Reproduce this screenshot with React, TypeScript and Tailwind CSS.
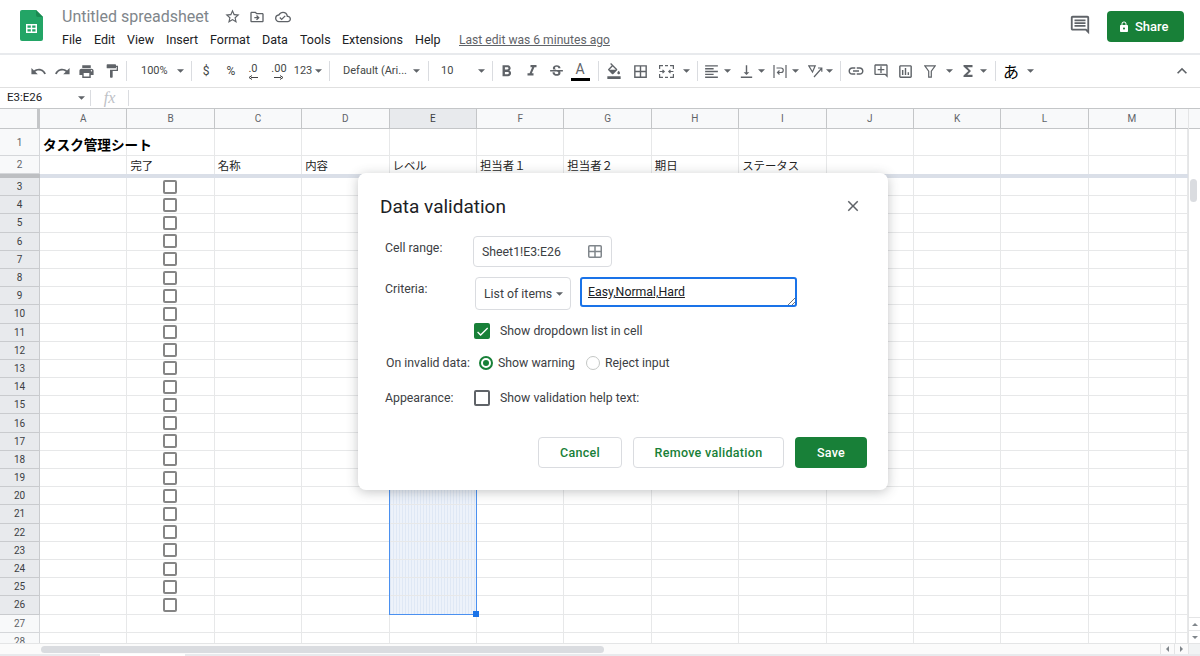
import type { ReactNode } from "react";
import {
  MdBorderAll,
  MdCheck,
  MdClose,
  MdExpandLess,
  MdFormatAlignLeft,
  MdFormatBold,
  MdFormatColorFill,
  MdFormatItalic,
  MdFormatPaint,
  MdFunctions,
  MdLink,
  MdLock,
  MdOutlineAddComment,
  MdOutlineCloudDone,
  MdOutlineComment,
  MdOutlineDriveFileMove,
  MdOutlineInsertChart,
  MdPrint,
  MdRedo,
  MdStarBorder,
  MdStrikethroughS,
  MdUndo,
  MdVerticalAlignBottom,
} from "react-icons/md";

const gridCols = "grid grid-cols-[40px_repeat(13,87.4px)_1fr]";
const columns = ["A", "B", "C", "D", "E", "F", "G", "H", "I", "J", "K", "L", "M"];
const headings = ["", "完了", "名称", "内容", "レベル", "担当者１", "担当者２", "期日", "ステータス", "", "", "", ""];
const rowNumbers = Array.from({ length: 26 }, (_, i) => i + 3);
const menus = [
  ["File", "w-[32px]"],
  ["Edit", "w-[33px]"],
  ["View", "w-[39px]"],
  ["Insert", "w-[44px]"],
  ["Format", "w-[52px]"],
  ["Data", "w-[38px]"],
  ["Tools", "w-[42px]"],
  ["Extensions", "w-[73px]"],
  ["Help", "w-[44px]"],
];

function Caret({ className = "" }: { className?: string }) {
  return (
    <span className={`flex justify-center ${className}`}>
      <svg width="7" height="4" viewBox="0 0 8 4">
        <path d="M0 0h8L4 4z" fill="#5f6368" />
      </svg>
    </span>
  );
}

function Sep({ className = "" }: { className?: string }) {
  return <span className={`h-[20px] w-px bg-[#dadce0] ${className}`} />;
}

function Slot({ className, children }: { className: string; children: ReactNode }) {
  return <span className={`flex items-center justify-center text-[#444746] ${className}`}>{children}</span>;
}

function MergeIcon() {
  return (
    <svg width="15" height="13" viewBox="0 0 15 13" fill="none" stroke="#5f6368" strokeWidth="1.2">
      <path d="M.6 4V.6h3.400M11 .6h3.400V4M.6 9v3.400H4M11 12.400h3.400V9M6 .6h3M6 12.400h3" />
      <path d="M.6 6.500h4.500M3.500 4.800l1.700 1.700-1.700 1.700M14.400 6.500H9.900M11.500 4.800L9.800 6.500l1.700 1.700" />
    </svg>
  );
}

function WrapIcon() {
  return (
    <svg width="14" height="15" viewBox="0 0 14 15" fill="none" stroke="#5f6368" strokeWidth="1.2">
      <path d="M1 1v13M13 1v13" />
      <path d="M3.500 4H8a2.200 2.200 0 0 1 0 4.500H4.500M6.500 6.500l-2 2 2 2" />
    </svg>
  );
}

function RotateIcon() {
  return (
    <svg width="15" height="13" viewBox="0 0 15 13" fill="none" stroke="#5f6368" strokeWidth="1.2">
      <path d="M.8.8h6.400L4.500 7z" />
      <path d="M6 12l7.500-8.500M10 3h3.800v3.800" />
    </svg>
  );
}

function FilterIcon() {
  return (
    <svg width="12" height="13" viewBox="0 0 12 13" fill="none" stroke="#5f6368" strokeWidth="1.2">
      <path d="M.8.8h10.400L7.300 6.200v6h-2.600v-6z" />
    </svg>
  );
}

function Toolbar() {
  return (
    <div className="flex h-[33px] items-center border-b border-[#e0e0e0] pl-[26px] text-[11px]">
      <Slot className="w-[24px]"><MdUndo size={17} color="#5f6368" /></Slot>
      <Slot className="w-[24px]"><MdRedo size={17} color="#5f6368" /></Slot>
      <Slot className="w-[25px]"><MdPrint size={17} color="#5f6368" /></Slot>
      <Slot className="w-[26px]"><MdFormatPaint size={16} color="#5f6368" /></Slot>
      <Sep className="ml-[1px]" />
      <span className="w-[48px] pl-[14px] text-[#444746]">100%</span>
      <Caret className="w-[10px]" />
      <Sep className="ml-[6px]" />
      <Slot className="w-[28px] text-[12px]">$</Slot>
      <Slot className="w-[22px] text-[12px]">%</Slot>
      <Slot className="w-[22px] flex-col">
        <span className="text-[11px] leading-[12px]">.0</span>
        <svg width="10" height="5" viewBox="0 0 10 5"><path d="M10 2.500H3M4 .5L1 2.500l3 2" fill="none" stroke="#444" strokeWidth="1" /></svg>
      </Slot>
      <Slot className="w-[30px] flex-col">
        <span className="text-[11px] leading-[12px]">.00</span>
        <svg width="10" height="5" viewBox="0 0 10 5"><path d="M0 2.500h7M6 .5l3 2-3 2" fill="none" stroke="#444" strokeWidth="1" /></svg>
      </Slot>
      <Slot className="w-[18px]">123</Slot>
      <Caret className="w-[12px]" />
      <Sep className="ml-[5px]" />
      <span className="w-[81px] whitespace-nowrap pl-[13px] text-[#444746]">Default (Ari...</span>
      <Caret className="w-[10px]" />
      <Sep className="ml-[7px]" />
      <span className="w-[47px] pl-[12px] text-[#444746]">10</span>
      <Caret className="w-[10px]" />
      <Sep className="ml-[6px]" />
      <Slot className="w-[27px]"><MdFormatBold size={19} color="#5f6368" /></Slot>
      <Slot className="w-[24px]"><MdFormatItalic size={18} color="#5f6368" /></Slot>
      <Slot className="w-[24px]"><MdStrikethroughS size={17} color="#5f6368" /></Slot>
      <Slot className="w-[24px] flex-col">
        <span className="text-[14px] leading-[15px] text-[#5f6368]">A</span>
        <span className="mt-[1px] h-[3px] w-[19px] bg-black" />
      </Slot>
      <Sep className="ml-[6px]" />
      <Slot className="w-[29px]"><MdFormatColorFill size={16} color="#5f6368" /></Slot>
      <Slot className="w-[25px]"><MdBorderAll size={17} color="#5f6368" /></Slot>
      <Slot className="w-[27px]"><MergeIcon /></Slot>
      <Caret className="w-[12px]" />
      <Sep className="ml-[5px]" />
      <Slot className="ml-[2px] w-[22px]"><MdFormatAlignLeft size={17} color="#5f6368" /></Slot>
      <Caret className="w-[10px]" />
      <Slot className="ml-[3px] w-[22px]"><MdVerticalAlignBottom size={17} color="#5f6368" /></Slot>
      <Caret className="w-[9px]" />
      <Slot className="ml-[4px] w-[20px]"><WrapIcon /></Slot>
      <Caret className="w-[10px]" />
      <Slot className="ml-[5px] w-[20px]"><RotateIcon /></Slot>
      <Caret className="w-[8px]" />
      <Sep className="ml-[7px]" />
      <Slot className="w-[30px]"><MdLink size={18} color="#5f6368" /></Slot>
      <Slot className="w-[20px]"><MdOutlineAddComment size={16} color="#5f6368" /></Slot>
      <Slot className="w-[28px]"><MdOutlineInsertChart size={17} color="#5f6368" /></Slot>
      <Slot className="w-[22px]"><FilterIcon /></Slot>
      <Caret className="ml-[3px] w-[10px]" />
      <Slot className="ml-[4px] w-[20px]"><MdFunctions size={18} color="#5f6368" /></Slot>
      <Caret className="w-[10px]" />
      <Sep className="ml-[7px]" />
      <Slot className="w-[30px] font-['Noto_Sans_CJK_JP',sans-serif] text-[16px] text-black">あ</Slot>
      <Caret className="w-[8px]" />
      <Slot className="ml-auto mr-[8px] w-[20px]"><MdExpandLess size={22} color="#5f6368" /></Slot>
    </div>
  );
}

function SheetCheckbox() {
  return <span className="mr-[1px] h-[14px] w-[14px] rounded-[2px] border-2 border-[#858585] bg-white" />;
}

function Sheet() {
  const cell = "border-b border-r border-[#e7e8e9]";
  const rowHead = "flex items-center justify-center border-b border-r text-[10px]";
  return (
    <div className="relative min-h-0 flex-1 overflow-hidden">
      <div className={`${gridCols} h-[20px] border-b border-[#c4c6c8] bg-[#f8f9fa] text-[10px] text-[#5f6368]`}>
        <div className="border-r-[3px] border-[#c4c6c8]" />
        {columns.map((c) => (
          <div
            key={c}
            className={`flex items-center justify-center border-r border-[#c4c6c8] ${c === "E" ? "bg-[#e8eaed] text-[#3c4043]" : ""}`}
          >
            {c}
          </div>
        ))}
        <div />
      </div>

      <div className={`${gridCols} h-[27px]`}>
        <div className={`${rowHead} border-[#d5d7da] bg-[#f8f9fa] text-[#5f6368]`}>1</div>
        {columns.map((c, i) => (
          <div key={c} className={`${cell} ${i === 0 ? "overflow-visible" : ""}`}>
            {i === 0 && (
              <span className="block whitespace-nowrap pl-[3px] pt-[5px] font-['Noto_Sans_CJK_JP',sans-serif] text-[13.6px] font-bold leading-[20px] text-black">
                タスク管理シート
              </span>
            )}
          </div>
        ))}
        <div className={cell} />
      </div>

      <div className={`${gridCols} h-[18px]`}>
        <div className={`${rowHead} border-[#d5d7da] bg-[#f8f9fa] text-[#5f6368]`}>2</div>
        {headings.map((h, i) => (
          <div
            key={i}
            className="overflow-hidden whitespace-nowrap border-r border-[#e7e8e9] pl-[3px] font-['Noto_Sans_CJK_JP',sans-serif] text-[11.4px] leading-[18px] text-[#222]"
          >
            {h}
          </div>
        ))}
        <div className="border-r border-[#e7e8e9]" />
      </div>

      <div className={`${gridCols} h-[4px]`}>
        <div className="bg-[#bdbfc2]" />
        <div className="col-span-14 bg-[#dadfe8]" />
      </div>

      {rowNumbers.map((n) => {
        const selected = n <= 26;
        return (
          <div key={n} className={`${gridCols} h-[18.2px]`}>
            <div
              className={`${rowHead} ${selected ? "border-[#c9cbce] bg-[#e8eaed] text-[#3c4043]" : "border-[#d5d7da] bg-[#f8f9fa] text-[#5f6368]"}`}
            >
              {n}
            </div>
            {columns.map((c) => (
              <div
                key={c}
                className={`${cell} flex items-center justify-center ${c === "E" && selected ? "bg-[repeating-linear-gradient(90deg,#dfe8f5_0_1px,#edf2fa_1px_3px)]" : ""}`}
              >
                {c === "B" && selected && <SheetCheckbox />}
              </div>
            ))}
            <div className={cell} />
          </div>
        );
      })}

      {/* range selection */}
      <div className="absolute left-[389px] top-[69px] h-[437px] w-[88px] border border-[#4a90f0]">
        <span className="absolute -bottom-[3px] -right-[3px] h-[6px] w-[6px] bg-[#1a73e8]" />
      </div>
    </div>
  );
}

function DialogCheck({ checked }: { checked?: boolean }) {
  if (checked) {
    return (
      <span className="flex h-[16px] w-[16px] items-center justify-center rounded-[2px] bg-[#188038]">
        <MdCheck size={15} color="#fff" />
      </span>
    );
  }
  return <span className="h-[16px] w-[16px] rounded-[2px] border-2 border-[#5f6368]" />;
}

function Dialog() {
  return (
    <div className="absolute left-[358px] top-[173px] w-[530px] rounded-[8px] bg-white pb-[22px] pl-[22px] pr-[21px] pt-[21px] text-[12.3px] text-[#3c4043] shadow-[0_2px_12px_rgba(60,64,67,0.3)]">
      <div className="flex h-[24px] items-center justify-between">
        <h2 className="pt-[2px] text-[19px] font-normal text-[#202124]">Data validation</h2>
        <MdClose size={18} color="#5f6368" className="mr-[5px]" />
      </div>

      <div className="mt-[18px] flex">
        <span className="w-[93px] pl-[5px] pt-[3px]">Cell range:</span>
        <div className="flex h-[31px] w-[139px] items-center justify-between rounded-[4px] border border-[#dadce0] pl-[8px] pr-[9px]">
          <span className="pt-[2px]">Sheet1!E3:E26</span>
          <svg width="14" height="13" viewBox="0 0 14 13" fill="none" stroke="#80868b" strokeWidth="1.500">
            <rect x="0.75" y="0.75" width="12.5" height="11.5" rx="1" />
            <path d="M7 1v11M1 6.500h12" />
          </svg>
        </div>
      </div>

      <div className="mt-[10px] flex">
        <span className="w-[93px] pl-[5px] pt-[3px]">Criteria:</span>
        <div className="ml-[2px] flex h-[33px] w-[96px] items-center justify-between rounded-[4px] border border-[#dadce0] pl-[8px] pr-[7px]">
          <span className="pt-[1px]">List of items</span>
          <Caret />
        </div>
        <div className="relative ml-[9px] h-[30px] w-[217px] rounded-[3px] border-2 border-[#1a73e8] pl-[6px] pt-[4px] leading-[18px] text-[#202124] underline">
          Easy,Normal,Hard
          <svg width="7" height="7" viewBox="0 0 7 7" className="absolute bottom-0 right-0" stroke="#70757a" strokeWidth="1">
            <path d="M0 7l7-7M4 7l3-3" />
          </svg>
        </div>
      </div>

      <div className="mt-[13px] flex h-[16px] items-center pl-[94px]">
        <DialogCheck checked />
        <span className="ml-[10px] pt-[1px]">Show dropdown list in cell</span>
      </div>

      <div className="mt-[16px] flex h-[16px] items-center pl-[6px]">
        <span className="w-[93px]">On invalid data:</span>
        <span className="flex h-[14px] w-[14px] items-center justify-center rounded-full border-2 border-[#188038]">
          <span className="h-[6px] w-[6px] rounded-full bg-[#188038]" />
        </span>
        <span className="ml-[5px] w-[88px]">Show warning</span>
        <span className="h-[14px] w-[14px] rounded-full border border-[#c4c7c5]" />
        <span className="ml-[5px]">Reject input</span>
      </div>

      <div className="mt-[19px] flex h-[16px] items-center">
        <span className="w-[94px] pl-[5px]">Appearance:</span>
        <DialogCheck />
        <span className="ml-[10px]">Show validation help text:</span>
      </div>

      <div className="mt-[31px] flex h-[31px] justify-end gap-[11px] text-[12.5px] font-medium tracking-[0.3px]">
        <button className="w-[84px] rounded-[4px] border border-[#dadce0] pt-[1px] text-[#188038]">Cancel</button>
        <button className="w-[151px] rounded-[4px] border border-[#dadce0] pt-[1px] text-[#188038]">Remove validation</button>
        <button className="w-[72px] rounded-[4px] bg-[#188038] pt-[1px] text-white">Save</button>
      </div>
    </div>
  );
}

export default function App() {
  return (
    <div className="relative flex h-[656px] w-[1200px] flex-col overflow-hidden bg-white font-['Roboto',sans-serif] text-[#202124]">
      {/* title bar */}
      <div className="flex h-[55px] border-b-2 border-[#e8eaed]">
        <div className="pl-[20px] pt-[10px]">
          <svg width="23" height="31" viewBox="0 0 23 31">
            <path d="M2 0h14l7 7v22a2 2 0 0 1-2 2H2a2 2 0 0 1-2-2V2a2 2 0 0 1 2-2z" fill="#23a566" />
            <path d="M16 0l7 7h-5a2 2 0 0 1-2-2z" fill="#1a8a52" />
            <path d="M6 14h11v9H6z" fill="#fff" />
            <path d="M7.500 15.500h3.300v2.300H7.500zM12.200 15.500h3.300v2.300h-3.300zM7.500 19.200h3.300v2.300H7.500zM12.200 19.200h3.300v2.300h-3.300z" fill="#23a566" />
          </svg>
        </div>
        <div className="ml-[19px] pt-[6px]">
          <div className="flex h-[21px] items-center">
            <span className="w-[162px] text-[16px] text-[#80868b]">Untitled spreadsheet</span>
            <MdStarBorder size={17} color="#5f6368" />
            <MdOutlineDriveFileMove size={16} color="#5f6368" className="ml-[8px]" />
            <MdOutlineCloudDone size={16} color="#5f6368" className="ml-[10px]" />
          </div>
          <div className="mt-[3px] flex h-[20px] items-center text-[12.5px] text-[#202124]">
            {menus.map(([label, width]) => (
              <span key={label} className={width}>
                {label}
              </span>
            ))}
            <span className="text-[12.1px] text-[#5f6368] underline">Last edit was 6 minutes ago</span>
          </div>
        </div>
        <div className="ml-auto flex h-[53px] items-start pr-[16px] pt-[11px]">
          <MdOutlineComment size={22} color="#5f6368" className="mr-[16px] mt-[3px]" />
          <button className="flex h-[31px] w-[77px] items-center gap-[5px] rounded-[4px] bg-[#188038] pl-[11px] text-[13px] font-medium text-white">
            <MdLock size={12} color="#fff" />
            Share
          </button>
        </div>
      </div>

      <Toolbar />

      {/* formula bar */}
      <div className="flex h-[20px] items-center text-[11.5px] text-[#202124]">
        <span className="w-[76px] pl-[7px]">E3:E26</span>
        <Caret className="w-[10px]" />
        <span className="ml-[4px] h-[16px] w-px bg-[#dadce0]" />
        <span className="w-[37px] text-center font-['Liberation_Serif',serif] text-[16px] italic text-[#bdc1c6]">fx</span>
        <span className="h-[16px] w-px bg-[#dadce0]" />
      </div>

      {/* sheet + vertical scrollbar */}
      <div className="flex min-h-0 flex-1 border-t border-[#c4c6c8]">
        <Sheet />
        <div className="flex w-[12px] flex-col border-l border-[#e4e5e6] bg-white">
          <div className="h-[20px] border-b border-[#c4c6c8] bg-[#f8f9fa]" />
          <div className="ml-[1px] mt-[50px] h-[23px] w-[7px] rounded-full bg-[#dadce0]" />
          <div className="mt-auto flex h-[13px] items-center justify-center border-t border-[#e4e5e6]">
            <svg width="6" height="3" viewBox="0 0 6 3"><path d="M3 0l3 3H0z" fill="#80868b" /></svg>
          </div>
          <div className="flex h-[13px] items-center justify-center border-t border-[#e4e5e6]">
            <svg width="6" height="3" viewBox="0 0 6 3"><path d="M0 0h6L3 3z" fill="#80868b" /></svg>
          </div>
        </div>
      </div>

      {/* horizontal scrollbar */}
      <div className="flex h-[11px] items-center border-t border-[#e4e5e6] bg-[#fbfbfb]">
        <div className="ml-[41px] h-[7px] w-[563px] rounded-full bg-[#dadce0]" />
        <div className="ml-auto flex h-full">
          <span className="flex w-[14px] items-center justify-center border-l border-[#e4e5e6]">
            <svg width="3" height="6" viewBox="0 0 3 6"><path d="M3 0v6L0 3z" fill="#80868b" /></svg>
          </span>
          <span className="flex w-[14px] items-center justify-center border-l border-[#e4e5e6]">
            <svg width="3" height="6" viewBox="0 0 3 6"><path d="M0 0v6l3-3z" fill="#80868b" /></svg>
          </span>
          <span className="w-[12px] border-l border-[#e4e5e6] bg-[#f1f3f4]" />
        </div>
      </div>
      <div className="flex h-[2px] bg-[#e8eaed]">
        <span className="ml-[100px] w-[85px] bg-white" />
      </div>

      <Dialog />
    </div>
  );
}
